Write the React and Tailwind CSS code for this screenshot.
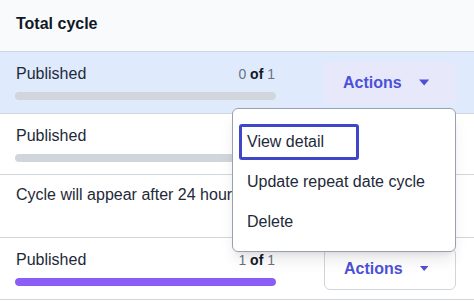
import React from "react";

function Caret() {
  return (
    <svg width="12" height="7" viewBox="0 0 12 7" className="block">
      <path d="M0 0 H12 L6 7 Z" fill="#4c51d8" />
    </svg>
  );
}

function ActionsButton({ active }) {
  return (
    <div
      className={
        "flex items-center w-[132px] h-[42px] rounded-md pl-[19px] pr-[27px] gap-[17px] shrink-0 " +
        (active ? "bg-[#e7e9fb]" : "bg-white border border-gray-300")
      }
    >
      <span className="text-[16px] font-bold text-[#4c51d8] leading-[20px]">Actions</span>
      <Caret />
    </div>
  );
}

function Row({ done, total, fill, bg, h, active }) {
  return (
    <div className={"flex items-start border-b border-gray-300 pl-4 pr-[18px] box-border " + bg + " " + h}>
      <div className="w-[260px] pt-[12px] flex flex-col">
        <div className="flex items-center justify-between h-[20px]">
          <span className="text-[16px] text-gray-800 leading-[20px]">Published</span>
          <span className="text-[14px] leading-[20px] text-gray-500 pr-[1px]">
            {done} <b className="text-gray-900">of</b> {total}
          </span>
        </div>
        <div className="mt-[8px] h-[8px] w-[261px] -ml-[1px] rounded-full bg-gray-300 overflow-hidden">
          {fill ? <div className="h-full w-full bg-[#8b5cf6] rounded-full" /> : null}
        </div>
      </div>
      <div className="flex-1" />
      <div className="self-center">
        <ActionsButton active={active} />
      </div>
    </div>
  );
}

export default function App() {
  return (
    <div
      className="relative w-[474px] h-[301px] bg-white overflow-hidden"
      style={{ fontFamily: '"Liberation Sans", Arial, sans-serif' }}
    >
      <div className="h-[52px] bg-[#f9fafb] border-b border-gray-300 box-border pl-4 flex items-center pb-[4px]">
        <span className="text-[16px] font-bold text-gray-900">Total cycle</span>
      </div>
      <Row done={0} total={1} bg="bg-[#dfeafd]" h="h-[62px]" active />
      <Row done={0} total={1} bg="bg-white" h="h-[61px]" />
      <div className="h-[63px] border-b border-gray-300 box-border pl-4 pt-[8px]">
        <span className="text-[16px] text-gray-800 leading-[20px]">Cycle will appear after 24 hours</span>
      </div>
      <Row done={1} total={1} fill bg="bg-white" h="h-[62px]" />

      <div className="absolute left-[232px] top-[108px] w-[224px] h-[144px] bg-white border border-gray-400 rounded-md shadow-lg box-border pl-[6px] pt-[15px] flex flex-col gap-[4px]">
        <div className="w-[120px] h-[36px] border-[3px] border-[#4046ca] rounded-[3px] box-border pl-[5px] flex items-center">
          <span className="text-[16px] text-gray-800">View detail</span>
        </div>
        <div className="h-[36px] pl-[8px] flex items-center">
          <span className="text-[16px] text-gray-800">Update repeat date cycle</span>
        </div>
        <div className="h-[36px] pl-[8px] flex items-center">
          <span className="text-[16px] text-gray-800">Delete</span>
        </div>
      </div>
    </div>
  );
}
